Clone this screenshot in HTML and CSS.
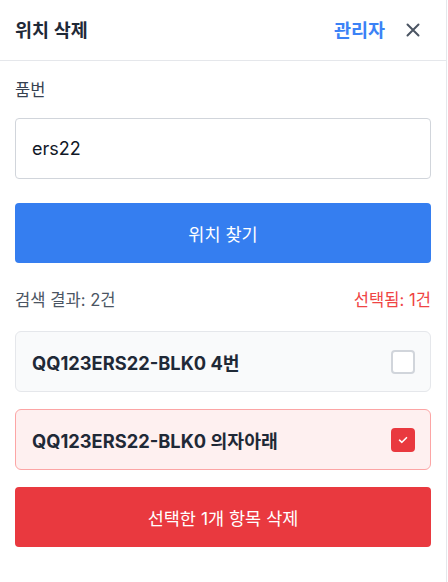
FILE: index.html
```html
<!DOCTYPE html>
<html lang="ko">
<head>
<meta charset="utf-8">
<link rel="stylesheet" href="styles.css">
</head>
<body>
<div class="panel">
  <header class="header">
    <h1 class="title">위치 삭제</h1>
    <div class="header-actions">
      <span class="admin">관리자</span>
      <svg class="close" width="14" height="14" viewBox="0 0 14 14" aria-hidden="true">
        <path d="M1.5 1.5 L12.5 12.5 M12.5 1.5 L1.5 12.5" stroke="#4b5563" stroke-width="2" stroke-linecap="round" fill="none"/>
      </svg>
    </div>
  </header>
  <main class="body">
    <label class="label">품번</label>
    <div class="input">ers22</div>
    <button class="btn btn-blue">위치 찾기</button>
    <div class="summary">
      <span class="count">검색 결과: 2건</span>
      <span class="selected">선택됨: 1건</span>
    </div>
    <div class="list">
      <div class="item">
        <span class="item-text">QQ123ERS22-BLK0 4번</span>
        <span class="check"></span>
      </div>
      <div class="item item-on">
        <span class="item-text">QQ123ERS22-BLK0 의자아래</span>
        <span class="check check-on">
          <svg width="10" height="8" viewBox="0 0 10 8" aria-hidden="true">
            <path d="M1.5 4.2 L3.9 6.3 L8.5 1.7" stroke="#fff" stroke-width="1.6" fill="none" stroke-linecap="round" stroke-linejoin="round"/>
          </svg>
        </span>
      </div>
    </div>
    <button class="btn btn-red">선택한 1개 항목 삭제</button>
  </main>
</div>
</body>
</html>
```

FILE: styles.css
```css
* { box-sizing: border-box; }
html, body { margin: 0; padding: 0; background: #fff; }
body {
  font-family: Inter, "Noto Sans CJK KR", "Noto Sans", sans-serif;
  color: #1f2937;
}
.panel {
  width: 447px;
  height: 582px;
  border-right: 1px solid #e5e7eb;
  background: #fff;
}
.header {
  height: 61px;
  border-bottom: 1px solid #e5e7eb;
  display: flex;
  align-items: center;
  justify-content: space-between;
  padding: 0 26px 0 15px;
}
.title {
  margin: 0;
  font-size: 18.5px;
  font-weight: 600;
  line-height: 28px;
  color: #1f2937;
}
.header-actions {
  display: flex;
  align-items: center;
  gap: 21px;
}
.admin {
  font-size: 18.5px;
  font-weight: 600;
  color: #3b82f6;
  line-height: 28px;
}
.close { display: block; }
.body {
  padding: 17px 15px 0 15px;
  width: 446px;
  display: flex;
  flex-direction: column;
}
.label {
  font-size: 16.5px;
  line-height: 24px;
  color: #374151;
  margin-bottom: 16px;
}
.input {
  height: 61px;
  border: 1px solid #d1d5db;
  border-radius: 4px;
  padding: 0 16px;
  display: flex;
  align-items: center;
  font-size: 18px;
  color: #111827;
}
.btn {
  display: flex;
  align-items: center;
  justify-content: center;
  height: 60px;
  border: 0;
  border-radius: 4px;
  color: #fff;
  font-family: inherit;
  font-size: 17.5px;
  font-weight: 400;
  width: 100%;
}
.btn-blue {
  margin-top: 24px;
  background: #357ef0;
}
.summary {
  margin-top: 25px;
  display: flex;
  justify-content: space-between;
  font-size: 16.6px;
  line-height: 24px;
}
.count { color: #4b5563; }
.selected { color: #ef4444; }
.list {
  margin-top: 19px;
  display: flex;
  flex-direction: column;
  gap: 17px;
}
.item {
  height: 61px;
  border: 1px solid #e5e7eb;
  border-radius: 6px;
  background: #f9fafb;
  display: flex;
  align-items: center;
  justify-content: space-between;
  padding: 0 15px 0 16px;
}
.item-on {
  background: #fef0f0;
  border-color: #fca5a5;
}
.item-text {
  font-size: 18.3px;
  font-weight: 700;
  color: #1f2937;
}
.check {
  width: 24px;
  height: 24px;
  border: 2px solid #d1d5db;
  border-radius: 4px;
  background: #fff;
  display: flex;
  align-items: center;
  justify-content: center;
}
.check-on {
  background: #e9393f;
  border-color: #e9393f;
}
.btn-red {
  margin-top: 17px;
  background: #e9393f;
}
```
